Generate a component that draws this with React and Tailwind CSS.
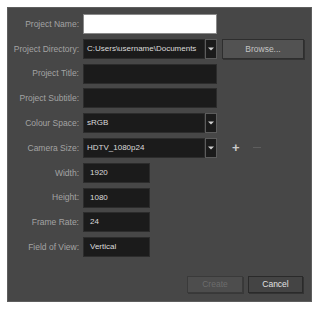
import React from "react";

const font = { fontFamily: '"Liberation Sans", Arial, sans-serif' };

// small down triangle for combo boxes
const Arrow = () => (
  <svg width="6" height="4" viewBox="0 0 6 4">
    <path d="M0 0.5 L6 0.5 L3 3.5 Z" fill="#d0d0d0" />
  </svg>
);

const Label = ({ children }) => (
  <div className="w-[71px] shrink-0 text-right text-[8.5px] text-[#a3a3a3] leading-none">
    {children}
  </div>
);

const Field = ({ value, w = "w-[134px]", pad = "pl-[3px]", white = false }) => (
  <div
    className={`${w} h-[20px] ml-[4px] flex items-center ${pad} text-[8px] leading-none overflow-hidden whitespace-nowrap ${
      white
        ? "bg-white border border-[#8a8a8a]"
        : "bg-[#1b1b1b] border border-[#2c2c2c] text-[#dcdcdc]"
    }`}
  >
    {value}
  </div>
);

const Combo = ({ value }) => (
  <div className="flex ml-[4px] h-[20px]">
    <div className="w-[122px] h-[20px] bg-[#1b1b1b] border border-[#2c2c2c] flex items-center pl-[3px] text-[8px] text-[#dcdcdc] leading-none overflow-hidden whitespace-nowrap">
      {value}
    </div>
    <div className="w-[12px] h-[20px] bg-[#1b1b1b] border border-[#5c5c5c] flex items-center justify-center">
      <Arrow />
    </div>
  </div>
);

export default function App() {
  return (
    <div className="w-[320px] h-[310px] bg-white pt-[7px] pl-[7px]" style={font}>
      <div className="w-[305px] h-[295px] bg-[#474747] border border-[#5e5e5e] flex flex-col">
        <div className="flex flex-col gap-[4.8px] pt-[6px]">
          <div className="flex items-center">
            <Label>Project Name:</Label>
            <Field white value="" />
          </div>
          <div className="flex items-center">
            <Label>Project Directory:</Label>
            <Combo value="C:Users\username\Documents" />
            <div className="ml-[5px] w-[82px] h-[20px] bg-[#525252] border border-[#2e2e2e] shadow-[1px_1px_0_#333] flex items-center justify-center text-[8.5px] text-[#c4c4c4] leading-none">
              Browse...
            </div>
          </div>
          <div className="flex items-center">
            <Label>Project Title:</Label>
            <Field value="" />
          </div>
          <div className="flex items-center">
            <Label>Project Subtitle:</Label>
            <Field value="" />
          </div>
          <div className="flex items-center">
            <Label>Colour Space:</Label>
            <Combo value="sRGB" />
          </div>
          <div className="flex items-center">
            <Label>Camera Size:</Label>
            <Combo value="HDTV_1080p24" />
            <span className="ml-[15px] text-[13px] font-bold text-[#cccccc] leading-none">+</span>
            <span className="ml-[13px] w-[8px] h-[1px] bg-[#5e5e5e]" />
          </div>
          <div className="flex items-center">
            <Label>Width:</Label>
            <Field w="w-[67px]" pad="pl-[6px]" value="1920" />
          </div>
          <div className="flex items-center">
            <Label>Height:</Label>
            <Field w="w-[67px]" pad="pl-[6px]" value="1080" />
          </div>
          <div className="flex items-center">
            <Label>Frame Rate:</Label>
            <Field w="w-[67px]" pad="pl-[6px]" value="24" />
          </div>
          <div className="flex items-center">
            <Label>Field of View:</Label>
            <Field w="w-[67px]" pad="pl-[6px]" value="Vertical" />
          </div>
        </div>
        <div className="mt-auto flex justify-end gap-[5px] pr-[8px] pb-[8px]">
          <div className="w-[56px] h-[17px] bg-[#4d4d4d] border border-[#3a3a3a] shadow-[1px_1px_0_#383838] flex items-center justify-center text-[8.5px] text-[#6c6c6c] leading-none">
            Create
          </div>
          <div className="w-[55px] h-[17px] bg-[#444444] border border-[#2a2a2a] shadow-[1px_1px_0_#333] flex items-center justify-center text-[8.5px] text-[#e2e2e2] leading-none">
            Cancel
          </div>
        </div>
      </div>
    </div>
  );
}
